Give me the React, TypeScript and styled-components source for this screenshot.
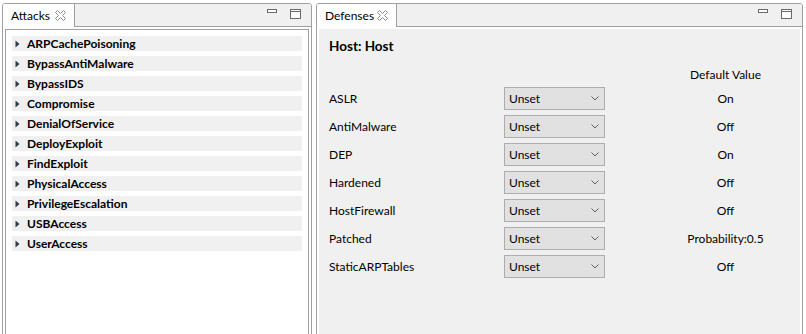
import { createGlobalStyle, styled } from 'styled-components';

const GlobalStyle = createGlobalStyle`
  html, body {
    margin: 0;
    padding: 0;
    background: #ffffff;
    overflow: hidden;
  }
  body {
    font-family: Lato, "Noto Sans", sans-serif;
    font-size: 12px;
    color: #000000;
  }
`;

const attacks = [
  'ARPCachePoisoning',
  'BypassAntiMalware',
  'BypassIDS',
  'Compromise',
  'DenialOfService',
  'DeployExploit',
  'FindExploit',
  'PhysicalAccess',
  'PrivilegeEscalation',
  'USBAccess',
  'UserAccess',
];

const defenses = [
  { name: 'ASLR', value: 'On' },
  { name: 'AntiMalware', value: 'Off' },
  { name: 'DEP', value: 'On' },
  { name: 'Hardened', value: 'Off' },
  { name: 'HostFirewall', value: 'Off' },
  { name: 'Patched', value: 'Probability:0.5' },
  { name: 'StaticARPTables', value: 'Off' },
];

// eclipse style outlined "x" for closing a view tab
const CloseIcon = () => (
  <svg width="11" height="11" viewBox="0 0 11 11">
    <path
      d="M0.5 2.5 L2.5 0.5 L5.5 3.5 L8.5 0.5 L10.5 2.5 L7.5 5.5 L10.5 8.5 L8.5 10.5 L5.5 7.5 L2.5 10.5 L0.5 8.5 L3.5 5.5 Z"
      fill="#ffffff"
      stroke="#8c8c8c"
      strokeWidth="1"
    />
  </svg>
);

const MinimizeIcon = () => (
  <svg width="10" height="4" viewBox="0 0 10 4">
    <rect x="0.5" y="0.5" width="9" height="3" fill="#ffffff" stroke="#6a6a6a" />
  </svg>
);

const MaximizeIcon = () => (
  <svg width="11" height="10" viewBox="0 0 11 10">
    <rect x="0.5" y="0.5" width="10" height="9" fill="#ffffff" stroke="#6a6a6a" />
    <line x1="0.5" y1="2.5" x2="10.5" y2="2.5" stroke="#6a6a6a" />
  </svg>
);

const Caret = () => (
  <svg width="5" height="8" viewBox="0 0 5 8">
    <path d="M0.5 0.5 L4.5 4 L0.5 7.5 Z" fill="#2e3a48" />
  </svg>
);

const Chevron = () => (
  <svg width="8" height="5" viewBox="0 0 8 5">
    <path d="M0.5 0.5 L4 4 L7.5 0.5" fill="none" stroke="#606060" strokeWidth="1" />
  </svg>
);

const ViewPart = ({ title, width, tabWidth, children }: { title: string; width: number; tabWidth: number; children: React.ReactNode }) => (
  <View $width={width}>
    <Header>
      <Tab $width={tabWidth}>
        <span>{title}</span>
        <CloseIcon />
      </Tab>
      <TabFiller>
        <MinimizeIcon />
        <MaximizeIcon />
      </TabFiller>
    </Header>
    <ViewBody>{children}</ViewBody>
  </View>
);

const App = () => {
  return (
    <>
      <GlobalStyle />
      <Page>
        <ViewPart title="Attacks" width={310} tabWidth={72}>
          <TreeFrame>
            {attacks.map((a) => (
              <TreeRow key={a}>
                <Caret />
                <span>{a}</span>
              </TreeRow>
            ))}
          </TreeFrame>
        </ViewPart>
        <ViewPart title="Defenses" width={487} tabWidth={80}>
          <FormFrame>
            <FormTitle>Host: Host</FormTitle>
            <DefenseGrid>
              <span />
              <span />
              <ValueCell>Default Value</ValueCell>
              {defenses.map((d) => (
                <DefenseRow key={d.name}>
                  <span>{d.name}</span>
                  <Combo>
                    <span>Unset</span>
                    <Chevron />
                  </Combo>
                  <ValueCell>{d.value}</ValueCell>
                </DefenseRow>
              ))}
            </DefenseGrid>
          </FormFrame>
        </ViewPart>
      </Page>
    </>
  );
};

export default App;

const Page = styled.div`
  display: flex;
  gap: 4px;
  padding: 3px 0 0 2px;
  height: 345px;
  box-sizing: border-box;
`;

const View = styled.section<{ $width: number }>`
  display: flex;
  flex-direction: column;
  width: ${(p) => p.$width}px;
  box-sizing: border-box;
  border: 1px solid #a0a0a0;
  border-radius: 3px 3px 0 0;
  background: #ffffff;
  overflow: hidden;
`;

const Header = styled.div`
  display: flex;
  height: 23px;
  flex-shrink: 0;
`;

const Tab = styled.div<{ $width: number }>`
  display: flex;
  align-items: center;
  justify-content: space-between;
  width: ${(p) => p.$width}px;
  box-sizing: border-box;
  padding: 0 8px 0 8px;
  background: #ffffff;
  border-right: 1px solid #a0a0a0;

  > span {
    line-height: 16px;
  }
  > svg {
    display: block;
  }
`;

const TabFiller = styled.div`
  flex: 1;
  display: flex;
  justify-content: flex-end;
  align-items: flex-start;
  gap: 13px;
  padding: 5px 10px 0 0;
  background: #f0f0f0;
  border-bottom: 1px solid #a0a0a0;

  > svg {
    display: block;
  }
`;

const ViewBody = styled.div`
  flex: 1;
  display: flex;
  padding: 2px;
`;

const TreeFrame = styled.div`
  flex: 1;
  display: flex;
  flex-direction: column;
  gap: 5px;
  padding: 6px 6px 0 6px;
  border: 1px solid #a0a0a0;
`;

const TreeRow = styled.div`
  display: flex;
  align-items: center;
  gap: 7px;
  height: 15px;
  padding-left: 3px;
  background: #f0f0f0;
  font-weight: 700;
  line-height: 15px;

  > svg {
    flex-shrink: 0;
  }
`;

const FormFrame = styled.div`
  flex: 1;
  padding: 9px 0 0 10px;
  background: #f0f0f0;
`;

const FormTitle = styled.div`
  font-size: 13.5px;
  font-weight: 700;
  line-height: 16px;
  margin-bottom: 13px;
`;

const DefenseGrid = styled.div`
  display: grid;
  grid-template-columns: 175px 101px 1fr;
  row-gap: 5px;
  line-height: 15px;
`;

const DefenseRow = styled.div`
  display: contents;

  > span {
    align-self: center;
  }
`;

const ValueCell = styled.span`
  align-self: center;
  text-align: center;
  padding-left: 46px;
`;

const Combo = styled.div`
  display: flex;
  align-items: center;
  justify-content: space-between;
  height: 23px;
  box-sizing: border-box;
  padding: 0 5px 0 4px;
  border: 1px solid #adadad;
  background: #e1e1e1;
`;
